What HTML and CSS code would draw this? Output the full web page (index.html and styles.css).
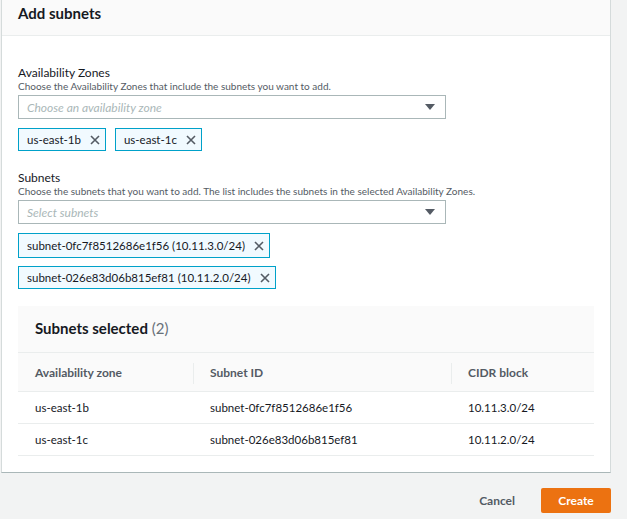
FILE: index.html
```html
<!DOCTYPE html>
<html>
<head>
<meta charset="utf-8">
<link rel="stylesheet" href="styles.css">
</head>
<body>
<div class="page">
  <div class="card">
    <div class="card-header"><h2 class="title">Add subnets</h2></div>
    <div class="card-body">
      <div class="field">
        <div class="label">Availability Zones</div>
        <div class="desc">Choose the Availability Zones that include the subnets you want to add.</div>
        <div class="select">
          <span class="placeholder">Choose an availability zone</span>
          <svg class="caret" width="10" height="6" viewBox="0 0 10 6"><path d="M0 0H10L5 6Z" fill="#545b64"/></svg>
        </div>
        <div class="tokens">
          <span class="token">us-east-1b<svg class="x" width="10" height="10" viewBox="0 0 10 10"><path d="M1 1L9 9M9 1L1 9" stroke="#545b64" stroke-width="1.6"/></svg></span>
          <span class="token">us-east-1c<svg class="x" width="10" height="10" viewBox="0 0 10 10"><path d="M1 1L9 9M9 1L1 9" stroke="#545b64" stroke-width="1.6"/></svg></span>
        </div>
      </div>
      <div class="field field-2">
        <div class="label">Subnets</div>
        <div class="desc">Choose the subnets that you want to add. The list includes the subnets in the selected Availability Zones.</div>
        <div class="select">
          <span class="placeholder">Select subnets</span>
          <svg class="caret" width="10" height="6" viewBox="0 0 10 6"><path d="M0 0H10L5 6Z" fill="#545b64"/></svg>
        </div>
        <div class="tokens tokens-col">
          <span class="token token-tall">subnet-0fc7f8512686e1f56 (10.11.3.0/24)<svg class="x" width="10" height="10" viewBox="0 0 10 10"><path d="M1 1L9 9M9 1L1 9" stroke="#545b64" stroke-width="1.6"/></svg></span>
          <span class="token">subnet-026e83d06b815ef81 (10.11.2.0/24)<svg class="x" width="10" height="10" viewBox="0 0 10 10"><path d="M1 1L9 9M9 1L1 9" stroke="#545b64" stroke-width="1.6"/></svg></span>
        </div>
      </div>
      <div class="table-box">
        <div class="table-head"><span class="table-title">Subnets selected</span> <span class="count">(2)</span></div>
        <div class="row row-head">
          <div class="cell c1">Availability zone</div>
          <div class="cell c2 sep">Subnet ID</div>
          <div class="cell c3 sep">CIDR block</div>
        </div>
        <div class="row">
          <div class="cell c1">us-east-1b</div>
          <div class="cell c2">subnet-0fc7f8512686e1f56</div>
          <div class="cell c3">10.11.3.0/24</div>
        </div>
        <div class="row">
          <div class="cell c1">us-east-1c</div>
          <div class="cell c2">subnet-026e83d06b815ef81</div>
          <div class="cell c3">10.11.2.0/24</div>
        </div>
      </div>
    </div>
  </div>
  <div class="actions">
    <span class="btn-link">Cancel</span>
    <span class="btn-primary">Create</span>
  </div>
</div>
</body>
</html>
```

FILE: styles.css
```css
* { box-sizing: border-box; }
html, body { margin: 0; padding: 0; }
body {
  background: #f2f3f3;
  font-family: Lato, "Liberation Sans", sans-serif;
  color: #16191f;
  width: 627px;
  height: 519px;
  overflow: hidden;
}
.page { padding-left: 1px; width: 612px; }
.card {
  background: #ffffff;
  border-left: 1px solid #d5dbdb;
  border-right: 1px solid #d5dbdb;
  border-bottom: 1px solid #aab7b8;
  width: 610px;
}
.card-header {
  background: #fafafa;
  border-bottom: 1px solid #eaeded;
  height: 36px;
  padding: 3px 0 0 16px;
}
.title {
  margin: 0;
  font-size: 15px;
  font-weight: 700;
  line-height: 20px;
}
.card-body { padding: 30px 16px 16px 16px; }
.label { font-size: 12px; line-height: 14px; }
.desc { font-size: 10px; line-height: 13px; color: #545b64; }
.select {
  margin-top: 2px;
  width: 428px;
  height: 24px;
  border: 1px solid #aab7b8;
  display: flex;
  align-items: center;
  justify-content: space-between;
  padding: 0 10px 0 8px;
}
.placeholder { font-style: italic; color: #aab7b8; font-size: 12px; }
.tokens { display: flex; gap: 9px; margin-top: 9px; }
.tokens-col { flex-direction: column; align-items: flex-start; gap: 8px; }
.token {
  display: inline-flex;
  align-items: center;
  gap: 9px;
  height: 23px;
  padding: 0 5px 0 8px;
  background: #f1faff;
  border: 1px solid #00a1c9;
  font-size: 11.5px;
}
.token-tall { height: 25px; }
.field-2 { margin-top: 20px; }
.table-box { margin-top: 17px; width: 576px; }
.table-head {
  background: #fafafa;
  height: 47px;
  border-bottom: 1px solid #eaeded;
  padding: 13px 0 0 17px;
  font-size: 15px;
}
.table-title { font-weight: 700; }
.count { color: #687078; font-weight: 400; }
.row {
  display: flex;
  align-items: center;
  height: 32px;
  border-bottom: 1px solid #eaeded;
  font-size: 11.5px;
}
.row-head {
  background: #fafafa;
  height: 39px;
  font-weight: 700;
  font-size: 12px;
  color: #545b64;
}
.cell { position: relative; padding-left: 17px; }
.c1 { width: 175px; }
.c2 { width: 258px; }
.c3 { flex: 1; }
.sep::before {
  content: "";
  position: absolute;
  left: 0;
  top: -2px;
  bottom: -4px;
  border-left: 1px solid #eaeded;
}
.actions {
  display: flex;
  justify-content: flex-end;
  align-items: center;
  gap: 26px;
  padding: 15px 1px 0 0;
}
.btn-link { font-size: 12px; font-weight: 700; color: #545b64; }
.btn-primary {
  background: #ec7211;
  color: #ffffff;
  font-size: 12px;
  font-weight: 700;
  border-radius: 2px;
  height: 25px;
  width: 70px;
  display: flex;
  align-items: center;
  justify-content: center;
}
```
